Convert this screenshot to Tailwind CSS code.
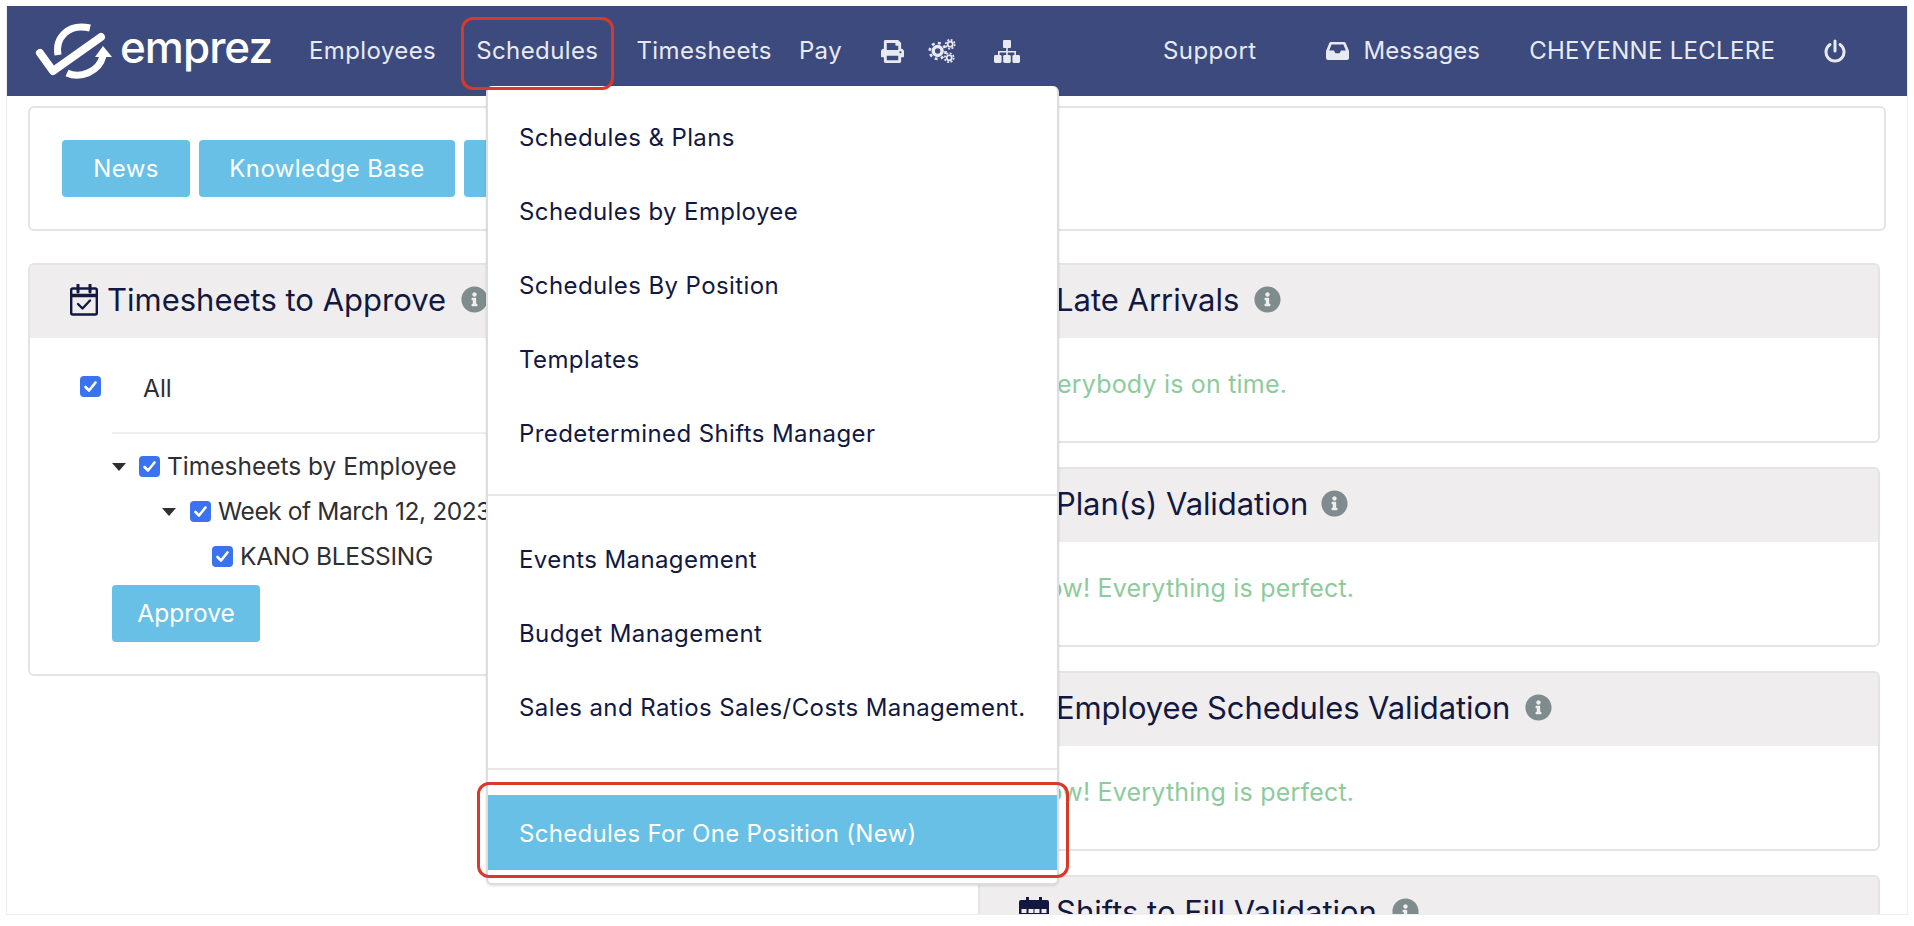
<!DOCTYPE html>
<html lang="en">

<head>
    <meta charset="UTF-8">
    <meta name="viewport" content="width=device-width, initial-scale=1.0">
    <script src="https://cdn.jsdelivr.net/npm/@tailwindcss/browser@4"></script>
    <title>Emprez | Dashboard</title>
</head>

<body class="bg-white font-[Inter,sans-serif] text-[#12183f] overflow-hidden">
    <div class="relative mx-[6px] mt-[6px] h-[909px] overflow-hidden bg-white border-x border-b border-[#eeeeee] box-border">

        <!-- top nav -->
        <nav class="flex items-center h-[90px] bg-[#3c4a7e] text-[#e8eaf2] text-[24px] tracking-[0.4px] -mx-px">
            <a href="#" class="flex items-center w-[267px] shrink-0 h-full relative">
                <svg class="absolute left-[14px] top-[4px]" width="100" height="80" viewBox="0 0 100 80" fill="none" stroke="#fff">
                    <path d="M38 45C35 28 48 13 70 18" stroke-width="7"/>
                    <path d="M20 43L33 61L81 27" stroke-width="8" stroke-linecap="round" stroke-linejoin="round"/>
                    <path d="M47 63C60 69 79 62 83 46" stroke-width="7"/>
                    <path d="M83 36L75 47H92Z" fill="#fff" stroke="none"/>
                </svg>
                <span class="absolute left-[114px] top-[17px] text-[44px] leading-[48px] font-medium text-white tracking-[-1px]">emprez</span>
            </a>
            <a href="#" class="ml-[36px]">Employees</a>
            <a href="#" class="ml-[40px]">Schedules</a>
            <a href="#" class="ml-[38px]">Timesheets</a>
            <a href="#" class="ml-[27px]">Pay</a>
            <svg class="ml-[39px]" width="23" height="23" viewBox="0 0 512 512" fill="currentColor">
                <path d="M448 192V77.25c0-8.49-3.37-16.62-9.37-22.63L393.37 9.37c-6-6-14.14-9.37-22.63-9.37H96C78.33 0 64 14.33 64 32v160c-35.35 0-64 28.65-64 64v112c0 8.84 7.16 16 16 16h48v96c0 17.67 14.33 32 32 32h320c17.67 0 32-14.33 32-32v-96h48c8.84 0 16-7.16 16-16V256c0-35.35-28.65-64-64-64zm-64 256H128v-96h256v96zm0-224H128V64h192v48c0 8.84 7.16 16 16 16h48v96zm48 72c-13.25 0-24-10.75-24-24 0-13.26 10.75-24 24-24s24 10.74 24 24c0 13.25-10.75 24-24 24z"/>
            </svg>
            <svg class="ml-[24px]" width="28" height="26" viewBox="0 0 29 26" fill="none" stroke="currentColor">
                <circle cx="10" cy="13" r="4.6" stroke-width="3.6"/>
                <circle cx="10" cy="13" r="8.2" stroke-width="2.6" stroke-dasharray="3 3.44"/>
                <circle cx="23" cy="6" r="2.6" stroke-width="1.8"/>
                <circle cx="23" cy="6" r="4.6" stroke-width="1.8" stroke-dasharray="2 1.6"/>
                <circle cx="22" cy="20" r="2.6" stroke-width="1.8"/>
                <circle cx="22" cy="20" r="4.6" stroke-width="1.8" stroke-dasharray="2 1.6"/>
            </svg>
            <svg class="ml-[38px]" width="26" height="23" viewBox="0 0 26 23" fill="currentColor">
                <rect x="9" y="0" width="8" height="8" rx="1"/>
                <path d="M12.2 8h1.6v3H22v5h-1.6v-3.4h-6.6V16h-1.6v-3.4H5.6V16H4v-5h8.2z"/>
                <rect x="0" y="15" width="7.6" height="8" rx="1.4"/>
                <rect x="9.2" y="15" width="7.6" height="8" rx="1.4"/>
                <rect x="18.4" y="15" width="7.6" height="8" rx="1.4"/>
            </svg>
            <a href="#" class="ml-[143px]">Support</a>
            <svg class="ml-[70px]" width="23" height="18" viewBox="0 0 23 18" fill="currentColor" fill-rule="evenodd">
                <path d="M5 0h13c.8 0 1.4.4 1.7 1L23 9v7c0 1.100-.9 2-2 2H2c-1.100 0-2-.9-2-2V9l3.300-8C3.600.4 4.200 0 5 0zM5.600 2.600L3.200 8.600h4.800l1.400 2.600h4.200l1.400-2.600h4.800l-2.400-6z"/>
            </svg>
            <a href="#" class="ml-[14px] tracking-[0.1px]">Messages</a>
            <a href="#" class="ml-[49px] tracking-[0.3px]">CHEYENNE LECLERE</a>
            <svg class="ml-[49px]" width="22" height="24" viewBox="0 0 22 24" fill="none" stroke="currentColor" stroke-width="3" stroke-linecap="round">
                <path d="M11 2v10"/>
                <path d="M6 5.500a9 9 0 1 0 10 0"/>
            </svg>
        </nav>

        <!-- page content -->
        <main class="px-[21px] pt-[10px]">
            <section class="flex items-center gap-[9px] h-[125px] pl-[32px] border-2 border-[#e4e4e4] rounded-md bg-white">
                <a href="#" class="flex items-center justify-center w-[128px] h-[57px] rounded bg-[#68c0e6] text-white text-[24px] tracking-[0.4px]">News</a>
                <a href="#" class="flex items-center justify-center w-[256px] h-[57px] rounded bg-[#68c0e6] text-white text-[24px] tracking-[0.4px]">Knowledge Base</a>
                <a href="#" class="flex items-center justify-center w-[200px] h-[57px] rounded bg-[#68c0e6] text-white text-[24px]"></a>
            </section>

            <div class="grid grid-cols-[926px_902px] gap-x-[24px] mt-[32px]">
                <!-- left column -->
                <section class="h-[413px] border-2 border-[#e4e4e4] rounded-md bg-white overflow-hidden">
                    <header class="flex items-center h-[73px] pl-[40px] pb-[4px] bg-[#efedee]">
                        <svg class="mr-[9px] shrink-0" width="28" height="32" viewBox="0 0 28 32" fill="none" stroke="#12183f" stroke-width="2.400">
                            <rect x="1.200" y="4.500" width="25.600" height="26" rx="1.500"/>
                            <path d="M1.200 11.500h25.600" stroke-width="3.500"/>
                            <path d="M8 1v7M20 1v7" stroke-linecap="round" stroke-width="3"/>
                            <path d="M8 20l4.500 4.500L20 16.500" stroke-linecap="round" stroke-linejoin="round"/>
                        </svg>
                        <h2 class="text-[31px] leading-none">Timesheets to Approve</h2>
                        <svg class="ml-[15px] shrink-0" width="27" height="27" viewBox="0 0 512 512" fill="#7f8c8d">
                            <path d="M256 8C119.043 8 8 119.083 8 256c0 136.997 111.043 248 248 248s248-111.003 248-248C504 119.083 392.957 8 256 8zm0 110c23.196 0 42 18.804 42 42s-18.804 42-42 42-42-18.804-42-42 18.804-42 42-42zm56 254c0 6.627-5.373 12-12 12h-88c-6.627 0-12-5.373-12-12v-24c0-6.627 5.373-12 12-12h12v-64h-12c-6.627 0-12-5.373-12-12v-24c0-6.627 5.373-12 12-12h64c6.627 0 12 5.373 12 12v100h12c6.627 0 12 5.373 12 12v24z"/>
                        </svg>
                    </header>
                    <div class="text-[#2f2f33] text-[24.500px]">
                        <div class="flex items-center h-[94px] pl-[50px]">
                            <span class="flex items-center justify-center w-[21px] h-[21px] rounded-[4px] bg-[#3b72f0] mt-[2px]">
                                <svg width="15" height="15" viewBox="0 0 15 15" fill="none" stroke="#fff" stroke-width="2.600" stroke-linecap="round" stroke-linejoin="round"><path d="M2.500 8l3.500 3.500 6.500-8"/></svg>
                            </span>
                            <span class="ml-[42px] mt-[7px]">All</span>
                        </div>
                        <div class="ml-[82px] border-t-2 border-[#eeeeee] pt-[10px]">
                            <div class="flex items-center h-[45px]">
                                <span class="w-0 h-0 border-x-[7px] border-x-transparent border-t-[8px] border-t-[#2f2f33]"></span>
                                <span class="ml-[13px] flex items-center justify-center w-[21px] h-[21px] rounded-[4px] bg-[#3b72f0]">
                                    <svg width="15" height="15" viewBox="0 0 15 15" fill="none" stroke="#fff" stroke-width="2.600" stroke-linecap="round" stroke-linejoin="round"><path d="M2.500 8l3.500 3.500 6.500-8"/></svg>
                                </span>
                                <span class="ml-[7px]">Timesheets by Employee</span>
                            </div>
                            <div class="flex items-center h-[45px] pl-[50px]">
                                <span class="w-0 h-0 border-x-[7px] border-x-transparent border-t-[8px] border-t-[#2f2f33]"></span>
                                <span class="ml-[14px] flex items-center justify-center w-[21px] h-[21px] rounded-[4px] bg-[#3b72f0]">
                                    <svg width="15" height="15" viewBox="0 0 15 15" fill="none" stroke="#fff" stroke-width="2.600" stroke-linecap="round" stroke-linejoin="round"><path d="M2.500 8l3.500 3.500 6.500-8"/></svg>
                                </span>
                                <span class="ml-[7px] tracking-[-0.4px]">Week of March 12, 2023</span>
                            </div>
                            <div class="flex items-center h-[45px] pl-[100px]">
                                <span class="flex items-center justify-center w-[21px] h-[21px] rounded-[4px] bg-[#3b72f0]">
                                    <svg width="15" height="15" viewBox="0 0 15 15" fill="none" stroke="#fff" stroke-width="2.600" stroke-linecap="round" stroke-linejoin="round"><path d="M2.500 8l3.500 3.500 6.500-8"/></svg>
                                </span>
                                <span class="ml-[7px] tracking-[-0.3px]">KANO BLESSING</span>
                            </div>
                            <button class="block w-[148px] h-[57px] mt-[6px] rounded bg-[#68c0e6] text-white text-[24.500px]">Approve</button>
                        </div>
                    </div>
                </section>

                <!-- right column -->
                <div class="flex flex-col gap-[24px]">
                    <section class="h-[180px] border-2 border-[#e4e4e4] rounded-md bg-white overflow-hidden">
                        <header class="flex items-center h-[73px] pl-[76px] pb-[4px] bg-[#efedee]">
                            <h2 class="text-[31px] leading-none">Late Arrivals</h2>
                            <svg class="ml-[15px] shrink-0" width="27" height="27" viewBox="0 0 512 512" fill="#7f8c8d">
                                <path d="M256 8C119.043 8 8 119.083 8 256c0 136.997 111.043 248 248 248s248-111.003 248-248C504 119.083 392.957 8 256 8zm0 110c23.196 0 42 18.804 42 42s-18.804 42-42 42-42-18.804-42-42 18.804-42 42-42zm56 254c0 6.627-5.373 12-12 12h-88c-6.627 0-12-5.373-12-12v-24c0-6.627 5.373-12 12-12h12v-64h-12c-6.627 0-12-5.373-12-12v-24c0-6.627 5.373-12 12-12h64c6.627 0 12 5.373 12 12v100h12c6.627 0 12 5.373 12 12v24z"/>
                            </svg>
                        </header>
                        <p class="pl-[48px] pt-[28px] text-[25px] tracking-[0.2px] text-[#8ecb9c]">Everybody is on time.</p>
                    </section>
                    <section class="h-[180px] border-2 border-[#e4e4e4] rounded-md bg-white overflow-hidden">
                        <header class="flex items-center h-[73px] pl-[76px] pb-[4px] bg-[#efedee]">
                            <h2 class="text-[31px] leading-none tracking-[-0.1px]">Plan(s) Validation</h2>
                            <svg class="ml-[13px] shrink-0" width="27" height="27" viewBox="0 0 512 512" fill="#7f8c8d">
                                <path d="M256 8C119.043 8 8 119.083 8 256c0 136.997 111.043 248 248 248s248-111.003 248-248C504 119.083 392.957 8 256 8zm0 110c23.196 0 42 18.804 42 42s-18.804 42-42 42-42-18.804-42-42 18.804-42 42-42zm56 254c0 6.627-5.373 12-12 12h-88c-6.627 0-12-5.373-12-12v-24c0-6.627 5.373-12 12-12h12v-64h-12c-6.627 0-12-5.373-12-12v-24c0-6.627 5.373-12 12-12h64c6.627 0 12 5.373 12 12v100h12c6.627 0 12 5.373 12 12v24z"/>
                            </svg>
                        </header>
                        <p class="pl-[44px] pt-[28px] text-[25px] tracking-[0.2px] text-[#8ecb9c]">Wow! Everything is perfect.</p>
                    </section>
                    <section class="h-[180px] border-2 border-[#e4e4e4] rounded-md bg-white overflow-hidden">
                        <header class="flex items-center h-[73px] pl-[76px] pb-[4px] bg-[#efedee]">
                            <h2 class="text-[31px] leading-none tracking-[-0.1px]">Employee Schedules Validation</h2>
                            <svg class="ml-[15px] shrink-0" width="27" height="27" viewBox="0 0 512 512" fill="#7f8c8d">
                                <path d="M256 8C119.043 8 8 119.083 8 256c0 136.997 111.043 248 248 248s248-111.003 248-248C504 119.083 392.957 8 256 8zm0 110c23.196 0 42 18.804 42 42s-18.804 42-42 42-42-18.804-42-42 18.804-42 42-42zm56 254c0 6.627-5.373 12-12 12h-88c-6.627 0-12-5.373-12-12v-24c0-6.627 5.373-12 12-12h12v-64h-12c-6.627 0-12-5.373-12-12v-24c0-6.627 5.373-12 12-12h64c6.627 0 12 5.373 12 12v100h12c6.627 0 12 5.373 12 12v24z"/>
                            </svg>
                        </header>
                        <p class="pl-[44px] pt-[28px] text-[25px] tracking-[0.2px] text-[#8ecb9c]">Wow! Everything is perfect.</p>
                    </section>
                    <section class="h-[180px] border-2 border-[#e4e4e4] rounded-md bg-white overflow-hidden">
                        <header class="flex items-center h-[73px] pl-[38px] pb-[4px] bg-[#efedee]">
                            <svg class="mr-[6px] shrink-0" width="32" height="32" viewBox="0 0 30 32" fill="#12183f">
                                <path d="M2 4h5V1h3v3h10V1h3v3h5a2 2 0 0 1 2 2v24a2 2 0 0 1-2 2H2a2 2 0 0 1-2-2V6a2 2 0 0 1 2-2zM2.500 13v4h5v-4zm7 0v4h5v-4zm6 0v4h5v-4zm7 0v4h5v-4zM2.500 19v4h5v-4zm7 0v4h5v-4zm6 0v4h5v-4zm7 0v4h5v-4zM2.500 25v4h5v-4zm7 0v4h5v-4zm6 0v4h5v-4zm7 0v4h5v-4z" fill-rule="evenodd"/>
                            </svg>
                            <h2 class="text-[31px] leading-none">Shifts to Fill Validation</h2>
                            <svg class="ml-[15px] shrink-0" width="27" height="27" viewBox="0 0 512 512" fill="#7f8c8d">
                                <path d="M256 8C119.043 8 8 119.083 8 256c0 136.997 111.043 248 248 248s248-111.003 248-248C504 119.083 392.957 8 256 8zm0 110c23.196 0 42 18.804 42 42s-18.804 42-42 42-42-18.804-42-42 18.804-42 42-42zm56 254c0 6.627-5.373 12-12 12h-88c-6.627 0-12-5.373-12-12v-24c0-6.627 5.373-12 12-12h12v-64h-12c-6.627 0-12-5.373-12-12v-24c0-6.627 5.373-12 12-12h64c6.627 0 12 5.373 12 12v100h12c6.627 0 12 5.373 12 12v24z"/>
                            </svg>
                        </header>
                    </section>
                </div>
            </div>
        </main>

        <!-- schedules dropdown, open over the page -->
        <div class="absolute left-[479px] top-[80px] w-[573px] h-[799px] bg-white border-2 border-[#dddddd] border-t-0 rounded-md shadow-sm text-[24px] tracking-[0.4px] pt-[15px]">
            <a href="#" class="flex items-center h-[74px] pl-[31px]">Schedules &amp; Plans</a>
            <a href="#" class="flex items-center h-[74px] pl-[31px]">Schedules by Employee</a>
            <a href="#" class="flex items-center h-[74px] pl-[31px]">Schedules By Position</a>
            <a href="#" class="flex items-center h-[74px] pl-[31px]">Templates</a>
            <a href="#" class="flex items-center h-[74px] pl-[31px]">Predetermined Shifts Manager</a>
            <div class="mt-[23px] mb-[27px] border-t-2 border-[#e8e8e8]"></div>
            <a href="#" class="flex items-center h-[74px] pl-[31px]">Events Management</a>
            <a href="#" class="flex items-center h-[74px] pl-[31px]">Budget Management</a>
            <a href="#" class="flex items-center h-[74px] pl-[31px]">Sales and Ratios Sales/Costs Management.</a>
            <div class="mt-[23px] mb-[25px] border-t-2 border-[#e8e8e8]"></div>
            <a href="#" class="flex items-center h-[75px] pl-[31px] pt-[2px] bg-[#68c0e6] text-white tracking-[0.3px]">Schedules For One Position (New)</a>
        </div>

        <!-- red annotation boxes -->
        <div class="absolute left-[454px] top-[11px] w-[153px] h-[73px] border-[3px] border-[#d9392b] rounded-xl"></div>
        <div class="absolute left-[470px] top-[776px] w-[592px] h-[96px] border-[3px] border-[#d9392b] rounded-xl"></div>
    </div>
</body>

</html>
